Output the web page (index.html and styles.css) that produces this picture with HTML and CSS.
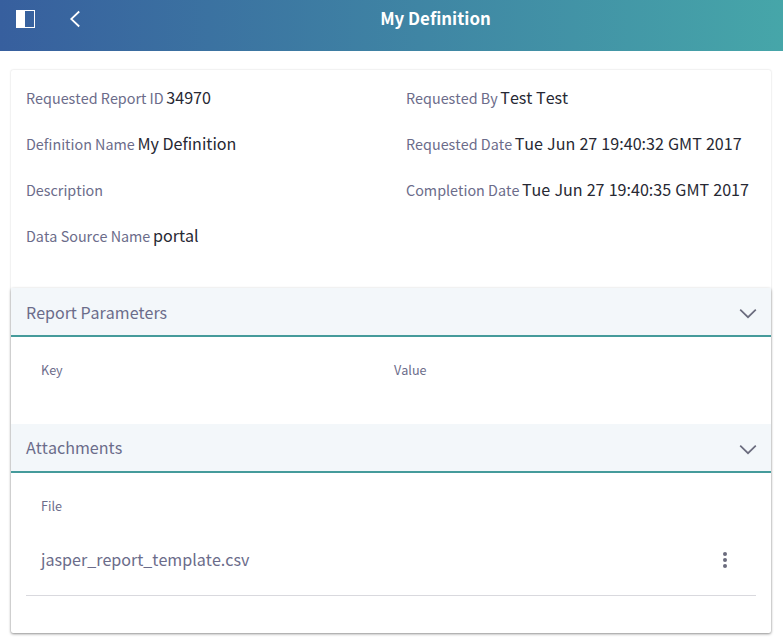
FILE: index.html
```html
<!DOCTYPE html>
<html lang="en">
<head>
<meta charset="utf-8">
<title>My Definition</title>
<link rel="stylesheet" href="styles.css">
</head>
<body>
<header class="control-bar">
  <div class="control-actions">
    <svg class="menu-icon" width="19" height="18" viewBox="0 0 19 18"><rect x=".5" y=".5" width="18" height="17" fill="none" stroke="#fff"/><path d="M0 0h9v18H0z" fill="#fff"/></svg>
    <svg class="back-icon" width="11" height="18" viewBox="0 0 11 18" fill="none" stroke="#fff" stroke-width="1.8"><path d="M9.2 1.5 1.2 9l8 7.5"/></svg>
  </div>
  <h1>My Definition</h1>
</header>
<main class="card">
  <div class="details">
    <dl>
      <div><dt>Requested Report ID</dt><dd>34970</dd></div>
      <div><dt>Definition Name</dt><dd>My Definition</dd></div>
      <div><dt>Description</dt><dd></dd></div>
      <div><dt>Data Source Name</dt><dd>portal</dd></div>
    </dl>
    <dl>
      <div><dt>Requested By</dt><dd>Test Test</dd></div>
      <div><dt>Requested Date</dt><dd class="date">Tue Jun 27 19:40:32 GMT 2017</dd></div>
      <div><dt>Completion Date</dt><dd class="date">Tue Jun 27 19:40:35 GMT 2017</dd></div>
    </dl>
  </div>
  <div class="panels">
    <section class="parameters">
      <h2>Report Parameters<svg width="18" height="11" viewBox="0 0 18 11"><path d="m1.2 1.6 7.8 7.6 7.8-7.6"/></svg></h2>
      <div class="table-head"><span>Key</span><span>Value</span></div>
    </section>
    <section class="attachments">
      <h2>Attachments<svg width="18" height="11" viewBox="0 0 18 11"><path d="m1.2 1.6 7.8 7.6 7.8-7.6"/></svg></h2>
      <div class="table-head"><span>File</span></div>
      <div class="file-row"><span>jasper_report_template.csv</span>
        <svg width="4" height="16" viewBox="0 0 4 16" fill="#6b6c7e"><circle cx="2" cy="2" r="2"/><circle cx="2" cy="8" r="2"/><circle cx="2" cy="14" r="2"/></svg>
      </div>
    </section>
  </div>
</main>
</body>
</html>
```
FILE: styles.css
```css
* { box-sizing: border-box; }
body {
  margin: 0;
  min-height: 644px;
  background: #fff;
  color: #6b6c8a;
  font: 16.1px/24px "Noto Sans CJK SC", sans-serif;
  font-kerning: none;
}
svg { display: block; flex: none; }
.control-bar {
  display: grid;
  grid-template-columns: 87px 1fr;
  height: 51px;
  padding: 6px 0 0 16px;
  margin-bottom: 19px;
  align-items: start;
  background: linear-gradient(90deg, #375f9e, #46a6a9);
  color: #fff;
}
.control-actions { display: flex; gap: 35px; padding-top: 4px; }
h1 { margin: 0; width: 665px; text-align: center; font-size: 16.85px; font-weight: 700; }
.card {
  width: 760px;
  margin-left: 11px;
  border-radius: 2px;
  box-shadow: 0 0 2px rgba(0, 0, 0, .2);
}
.details { display: grid; grid-template-columns: 380px 380px; height: 218px; padding: 4px 0 0 15px; }
dl { margin: 0; }
dl div { display: flex; align-items: baseline; gap: 2.6px; height: 46px; line-height: 46px; white-space: nowrap; }
dt { font-size: 14.35px; }
dd { margin: 0; color: #272833; }
dd:empty::before { content: "\200b"; }
.date { word-spacing: .5px; }
.panels { border-radius: 2px; box-shadow: 0 1px 3px rgba(0, 0, 0, .4); }
.parameters { height: 136px; }
.attachments { height: 209px; }
h2 {
  display: flex;
  align-items: center;
  justify-content: space-between;
  height: 49px;
  margin: 0;
  padding: 0 14px 0 15px;
  background: #f3f7fa;
  border-bottom: 2px solid #459b9b;
  font-size: 16.1px;
  font-weight: 400;
}
.parameters h2 { font-size: 16px; }
.attachments h2 { line-height: 22px; padding-bottom: 1px; }
h2 svg { margin-top: 4px; fill: none; stroke: #6b6c7e; stroke-width: 1.7; }
.attachments h2 svg { margin-top: 5px; }
.table-head { display: grid; grid-template-columns: 353px 1fr; padding: 21px 30px 0; font-size: 12.6px; }
.file-row {
  display: flex;
  align-items: center;
  justify-content: space-between;
  height: 72px;
  margin: 6px 15px 0;
  padding: 0 29px 0 15px;
  border-bottom: 1px solid #d9d9de;
}
.file-row span { padding-bottom: 2px; }
```
